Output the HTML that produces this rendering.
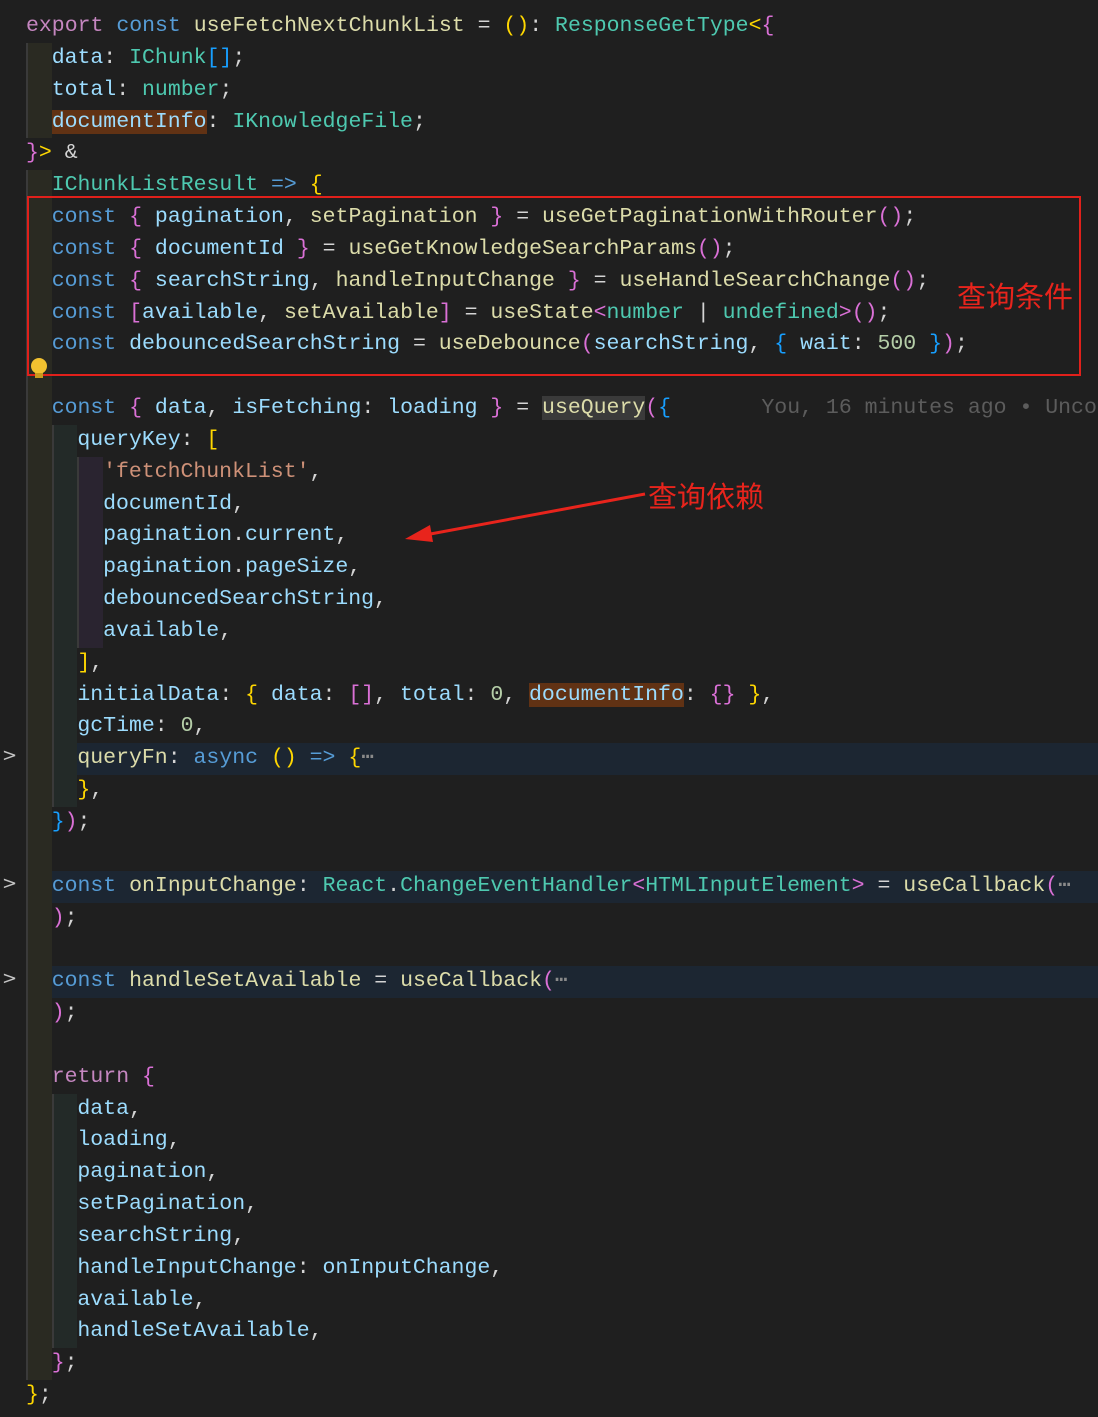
<!DOCTYPE html>
<html><head><meta charset="utf-8"><style>
body{margin:0;width:1098px;height:1417px;background:#1f1f1f;overflow:hidden;position:relative;font-family:"Liberation Mono",monospace;font-size:21.5px;color:#d4d4d4}
.l{position:absolute;left:26px;height:31.84px;line-height:31.84px;white-space:pre;right:0;overflow:hidden}
.f{background:#1c2632}
.i1{display:inline-block;width:25.7px;height:31.84px;vertical-align:top;background:#2a2a22;box-shadow:inset 2px 0 #3a3a3a}
.i2{display:inline-block;width:25.7px;height:31.84px;vertical-align:top;background:#232a28;box-shadow:inset 2px 0 #3a3a3a}
.i3{display:inline-block;width:25.7px;height:31.84px;vertical-align:top;background:#2a2430;box-shadow:inset 2px 0 #3a3a3a}
.k{color:#569cd6}.c{color:#c586c0}.fn{color:#dcdcaa}.v{color:#9cdcfe}.t{color:#4ec9b0}.s{color:#ce9178}.n{color:#b5cea8}
.g{color:#ffd700}.p{color:#da70d6}.b{color:#179fff}
.hl{background:#613214}.hq{background:#3a3a3a}
.fold{position:absolute;left:2px;color:#c5c5c5;font-family:"DejaVu Sans",sans-serif;font-size:18px}
.dots{color:#8a8a8a}
.cn{position:absolute;color:#e8241c;font-family:"Liberation Sans","Noto Sans CJK SC",sans-serif;font-size:29px}
</style></head><body>
<div class="l" style="top:11px"><span class="c">export</span> <span class="k">const</span> <span class="fn">useFetchNextChunkList</span> = <span class="g">()</span>: <span class="t">ResponseGetType</span><span class="g">&lt;</span><span class="p">{</span></div>
<div class="l" style="top:42.84px"><span class="i1"></span><span class="v">data</span>: <span class="t">IChunk</span><span class="b">[]</span>;</div>
<div class="l" style="top:74.68px"><span class="i1"></span><span class="v">total</span>: <span class="t">number</span>;</div>
<div class="l" style="top:106.52px"><span class="i1"></span><span class="v hl">documentInfo</span>: <span class="t">IKnowledgeFile</span>;</div>
<div class="l" style="top:138.36px"><span class="p">}</span><span class="g">&gt;</span> &amp;</div>
<div class="l" style="top:170.2px"><span class="i1"></span><span class="t">IChunkListResult</span> <span class="k">=&gt;</span> <span class="g">{</span></div>
<div class="l" style="top:202.04px"><span class="i1"></span><span class="k">const</span> <span class="p">{</span> <span class="v">pagination</span>, <span class="fn">setPagination</span> <span class="p">}</span> = <span class="fn">useGetPaginationWithRouter</span><span class="p">()</span>;</div>
<div class="l" style="top:233.88px"><span class="i1"></span><span class="k">const</span> <span class="p">{</span> <span class="v">documentId</span> <span class="p">}</span> = <span class="fn">useGetKnowledgeSearchParams</span><span class="p">()</span>;</div>
<div class="l" style="top:265.72px"><span class="i1"></span><span class="k">const</span> <span class="p">{</span> <span class="v">searchString</span>, <span class="fn">handleInputChange</span> <span class="p">}</span> = <span class="fn">useHandleSearchChange</span><span class="p">()</span>;</div>
<div class="l" style="top:297.56px"><span class="i1"></span><span class="k">const</span> <span class="p">[</span><span class="v">available</span>, <span class="fn">setAvailable</span><span class="p">]</span> = <span class="fn">useState</span><span class="p">&lt;</span><span class="t">number</span> | <span class="t">undefined</span><span class="p">&gt;()</span>;</div>
<div class="l" style="top:329.4px"><span class="i1"></span><span class="k">const</span> <span class="v">debouncedSearchString</span> = <span class="fn">useDebounce</span><span class="p">(</span><span class="v">searchString</span>, <span class="b">{</span> <span class="v">wait</span>: <span class="n">500</span> <span class="b">}</span><span class="p">)</span>;</div>
<div class="l" style="top:361.24px"><span class="i1"></span></div>
<div class="l" style="top:393.08px"><span class="i1"></span><span class="k">const</span> <span class="p">{</span> <span class="v">data</span>, <span class="v">isFetching</span>: <span class="v">loading</span> <span class="p">}</span> = <span class="fn hq">useQuery</span><span class="p">(</span><span class="b">{</span>       <span style="color:#5c5c5c">You, 16 minutes ago • Uncom</span></div>
<div class="l" style="top:424.92px"><span class="i1"></span><span class="i2"></span><span class="v">queryKey</span>: <span class="g">[</span></div>
<div class="l" style="top:456.76px"><span class="i1"></span><span class="i2"></span><span class="i3"></span><span class="s">'fetchChunkList'</span>,</div>
<div class="l" style="top:488.6px"><span class="i1"></span><span class="i2"></span><span class="i3"></span><span class="v">documentId</span>,</div>
<div class="l" style="top:520.44px"><span class="i1"></span><span class="i2"></span><span class="i3"></span><span class="v">pagination</span>.<span class="v">current</span>,</div>
<div class="l" style="top:552.28px"><span class="i1"></span><span class="i2"></span><span class="i3"></span><span class="v">pagination</span>.<span class="v">pageSize</span>,</div>
<div class="l" style="top:584.12px"><span class="i1"></span><span class="i2"></span><span class="i3"></span><span class="v">debouncedSearchString</span>,</div>
<div class="l" style="top:615.96px"><span class="i1"></span><span class="i2"></span><span class="i3"></span><span class="v">available</span>,</div>
<div class="l" style="top:647.8px"><span class="i1"></span><span class="i2"></span><span class="g">]</span>,</div>
<div class="l" style="top:679.64px"><span class="i1"></span><span class="i2"></span><span class="v">initialData</span>: <span class="g">{</span> <span class="v">data</span>: <span class="p">[]</span>, <span class="v">total</span>: <span class="n">0</span>, <span class="v hl">documentInfo</span>: <span class="p">{}</span> <span class="g">}</span>,</div>
<div class="l" style="top:711.48px"><span class="i1"></span><span class="i2"></span><span class="v">gcTime</span>: <span class="n">0</span>,</div>
<div class="l f" style="top:743.32px"><span class="i1"></span><span class="i2"></span><span class="fn">queryFn</span>: <span class="k">async</span> <span class="g">()</span> <span class="k">=&gt;</span> <span class="g">{</span><span class="dots">⋯</span></div>
<div class="l" style="top:775.16px"><span class="i1"></span><span class="i2"></span><span class="g">}</span>,</div>
<div class="l" style="top:807px"><span class="i1"></span><span class="b">}</span><span class="p">)</span>;</div>
<div class="l" style="top:838.84px"><span class="i1"></span></div>
<div class="l f" style="top:870.68px"><span class="i1"></span><span class="k">const</span> <span class="fn">onInputChange</span>: <span class="t">React</span>.<span class="t">ChangeEventHandler</span><span class="p">&lt;</span><span class="t">HTMLInputElement</span><span class="p">&gt;</span> = <span class="fn">useCallback</span><span class="p">(</span><span class="dots">⋯</span></div>
<div class="l" style="top:902.52px"><span class="i1"></span><span class="p">)</span>;</div>
<div class="l" style="top:934.36px"><span class="i1"></span></div>
<div class="l f" style="top:966.2px"><span class="i1"></span><span class="k">const</span> <span class="fn">handleSetAvailable</span> = <span class="fn">useCallback</span><span class="p">(</span><span class="dots">⋯</span></div>
<div class="l" style="top:998.04px"><span class="i1"></span><span class="p">)</span>;</div>
<div class="l" style="top:1029.88px"><span class="i1"></span></div>
<div class="l" style="top:1061.72px"><span class="i1"></span><span class="c">return</span> <span class="p">{</span></div>
<div class="l" style="top:1093.56px"><span class="i1"></span><span class="i2"></span><span class="v">data</span>,</div>
<div class="l" style="top:1125.4px"><span class="i1"></span><span class="i2"></span><span class="v">loading</span>,</div>
<div class="l" style="top:1157.24px"><span class="i1"></span><span class="i2"></span><span class="v">pagination</span>,</div>
<div class="l" style="top:1189.08px"><span class="i1"></span><span class="i2"></span><span class="v">setPagination</span>,</div>
<div class="l" style="top:1220.92px"><span class="i1"></span><span class="i2"></span><span class="v">searchString</span>,</div>
<div class="l" style="top:1252.76px"><span class="i1"></span><span class="i2"></span><span class="v">handleInputChange</span>: <span class="v">onInputChange</span>,</div>
<div class="l" style="top:1284.6px"><span class="i1"></span><span class="i2"></span><span class="v">available</span>,</div>
<div class="l" style="top:1316.44px"><span class="i1"></span><span class="i2"></span><span class="v">handleSetAvailable</span>,</div>
<div class="l" style="top:1348.28px"><span class="i1"></span><span class="p">}</span>;</div>
<div class="l" style="top:1380.12px"><span class="g">}</span>;</div>

<div class="fold" style="top:745px">&gt;</div>
<div class="fold" style="top:873px">&gt;</div>
<div class="fold" style="top:968px">&gt;</div>

<div style="position:absolute;left:27px;top:196px;width:1050px;height:176px;border:2px solid #e0201b"></div>
<div class="cn" style="left:957px;top:274px">查询条件</div>
<div class="cn" style="left:648px;top:474px">查询依赖</div>
<svg style="position:absolute;left:0;top:0" width="1098" height="1417">
<path d="M645 494 L425 535" stroke="#e8241c" stroke-width="3" fill="none"/>
<path d="M405 539 L430 525 L433 542 Z" fill="#e8241c"/>
<circle cx="39" cy="366" r="8" fill="#f2c230"/>
<rect x="35" y="373" width="8" height="5" fill="#c99a1e"/>
</svg>
</body></html>
